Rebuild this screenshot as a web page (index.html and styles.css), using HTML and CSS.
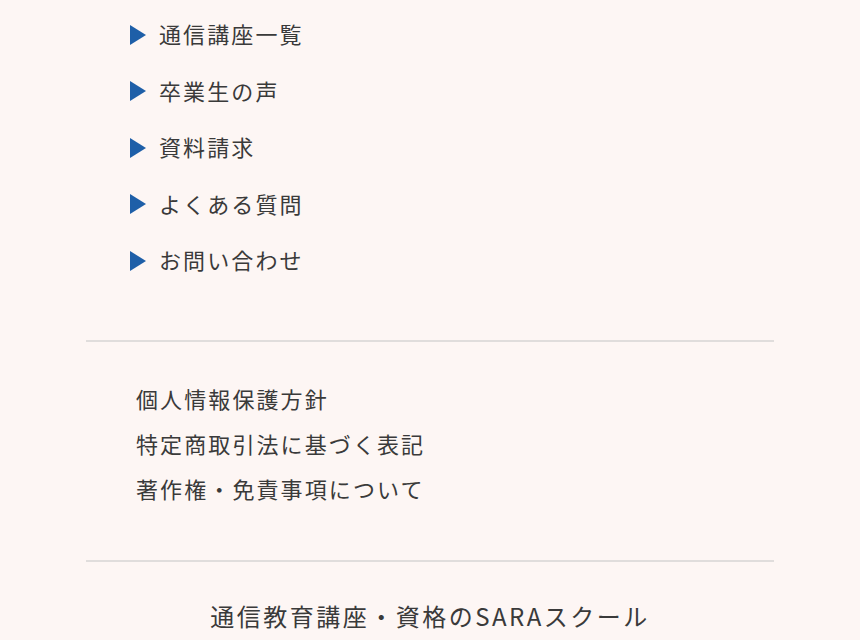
FILE: index.html
```html
<!DOCTYPE html>
<html lang="ja">
	<head>
		<meta charset="UTF-8" />
		<meta name="viewport" content="width=device-width, initial-scale=1.0" />
		<link rel="stylesheet" href="styles.css">
		<title>SARAスクール</title>
	</head>
	<body>
		<footer class="footer">
			<div class="footer_inner">
				<ul class="nav">
					<li class="nav_item"><span class="arrow"></span>通信講座一覧</li>
					<li class="nav_item"><span class="arrow"></span>卒業生の声</li>
					<li class="nav_item"><span class="arrow"></span>資料請求</li>
					<li class="nav_item"><span class="arrow"></span>よくある質問</li>
					<li class="nav_item"><span class="arrow"></span>お問い合わせ</li>
				</ul>
				<ul class="sub">
					<li class="sub_item">個人情報保護方針</li>
					<li class="sub_item">特定商取引法に基づく表記</li>
					<li class="sub_item">著作権・免責事項について</li>
				</ul>
				<p class="copy">通信教育講座・資格のSARAスクール</p>
			</div>
		</footer>
	</body>
</html>
```

FILE: styles.css
```css
* {
	margin: 0;
	padding: 0;
	box-sizing: border-box;
}
body {
	background-color: #fdf6f4;
	color: #3a3a3a;
	font-family: "Noto Sans CJK JP", "Noto Sans", sans-serif;
	font-size: 22px;
}
ul {
	list-style: none;
}
.footer_inner {
	width: 688px;
	margin: 0 auto;
}
.nav {
	padding: 5px 0 52px 44px;
	border-bottom: 2px solid #e0dddc;
}
.nav_item {
	height: 56.5px;
	display: flex;
	align-items: center;
	gap: 13px;
	letter-spacing: 2.1px;
}
.arrow {
	width: 0;
	height: 0;
	margin-top: 3px;
	border-top: 10px solid transparent;
	border-bottom: 10px solid transparent;
	border-left: 16px solid #1e5fa8;
}
.sub {
	padding: 34px 0 49px 50px;
	border-bottom: 2px solid #e0dddc;
}
.sub_item {
	height: 45px;
	display: flex;
	align-items: center;
	letter-spacing: 2.1px;
}
.copy {
	text-align: center;
	padding-top: 36px;
	font-size: 24px;
	letter-spacing: 2.5px;
}
```
